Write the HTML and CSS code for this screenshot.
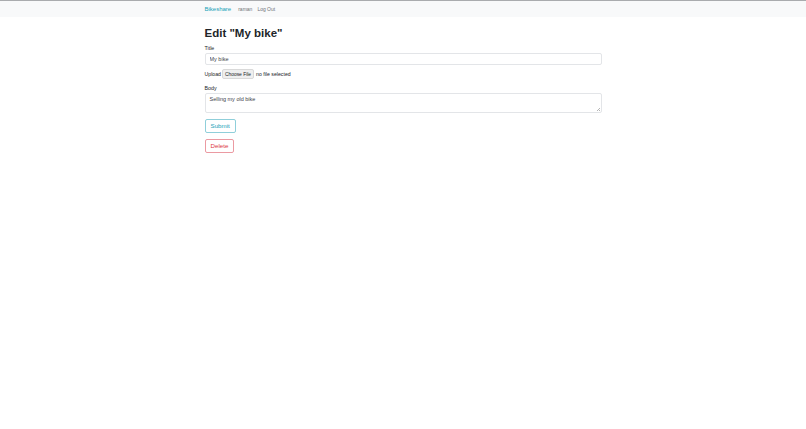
FILE: index.html
```html
<!DOCTYPE html>
<html>
<head>
<meta charset="utf-8">
<title>Edit</title>
<link rel="stylesheet" href="styles.css">
</head>
<body>
<nav class="navbar">
  <div class="container nav-inner">
    <a class="brand" href="#">Bikeshare</a>
    <a class="nav-link" href="#">raman</a>
    <a class="nav-link" href="#">Log Out</a>
  </div>
</nav>
<main class="container">
  <h1 class="title">Edit "My bike"</h1>
  <form class="form">
    <label class="label" for="title">Title</label>
    <input class="input" id="title" type="text" value="My bike">
    <div class="upload-row">
      <span class="upload-label">Upload</span>
      <span class="file-btn">Choose File</span>
      <span class="file-text">no file selected</span>
    </div>
    <label class="label" for="body">Body</label>
    <div class="textarea-wrap">
      <textarea class="textarea" id="body">Selling my old bike</textarea>
    </div>
    <div class="actions">
      <button type="button" class="btn btn-info">Submit</button>
      <button type="button" class="btn btn-danger">Delete</button>
    </div>
  </form>
</main>
</body>
</html>
```
FILE: styles.css
```css
html, body {
  margin: 0;
  padding: 0;
  background: #fff;
  font-family: "Liberation Sans", Arial, sans-serif;
  color: #212529;
}
.container {
  width: 397px;
  margin: 0 auto;
}
.navbar {
  border-top: 1px solid #a9abae;
  background: #f8f9fa;
  height: 16px;
}
.nav-inner {
  display: flex;
  align-items: center;
  height: 16px;
}
.brand {
  font-size: 6px;
  color: #17a2b8;
  text-decoration: none;
  margin-right: 7px;
}
.nav-link {
  font-size: 5px;
  color: #6f7378;
  text-decoration: none;
  margin-right: 5px;
}
.title {
  font-size: 11.5px;
  font-weight: 700;
  margin: 9px 0 4px;
  line-height: 15px;
  letter-spacing: 0;
}
.form {
  display: flex;
  flex-direction: column;
}
.label {
  font-size: 5.3px;
  line-height: 7px;
  margin-bottom: 1px;
}
.input {
  box-sizing: border-box;
  width: 100%;
  height: 12px;
  border: 1px solid #e3e5e8;
  border-radius: 2px;
  padding: 0 4px;
  font-family: inherit;
  font-size: 5.5px;
  color: #3d434a;
  margin: 0 0 4px;
  outline: none;
}
.upload-row {
  display: flex;
  align-items: center;
  height: 10px;
  font-size: 5.2px;
  margin-bottom: 6px;
}
.upload-label {
  margin-right: 1px;
}
.file-btn {
  box-sizing: border-box;
  height: 10px;
  display: flex;
  align-items: center;
  padding: 0 2px;
  font-size: 4.9px;
  background: #efefef;
  border: 1px solid #d9d9d9;
  border-radius: 2px;
  margin-right: 2px;
}
.textarea-wrap {
  position: relative;
  margin: 0 0 6px;
}
.textarea-wrap::after {
  content: "";
  position: absolute;
  right: 2px;
  bottom: 2px;
  width: 3px;
  height: 3px;
  background: linear-gradient(135deg, transparent 45%, #b5b5b5 45%, #b5b5b5 60%, transparent 60%, transparent 75%, #b5b5b5 75%);
}
.textarea {
  box-sizing: border-box;
  width: 100%;
  height: 20px;
  border: 1px solid #e3e5e8;
  border-radius: 2px;
  padding: 2px 4px;
  font-family: inherit;
  font-size: 5.5px;
  color: #3d434a;
  margin: 0;
  outline: none;
  display: block;
  resize: none;
}
.actions {
  display: flex;
  flex-direction: column;
  align-items: flex-start;
  gap: 6px;
}
.btn {
  box-sizing: border-box;
  height: 14px;
  padding: 0 5px;
  background: #fff;
  border-radius: 2px;
  font-family: inherit;
  font-size: 6.2px;
  line-height: 12px;
}
.btn-info {
  border: 1px solid #8fcfda;
  color: #17a2b8;
}
.btn-danger {
  border: 1px solid #eb9aa2;
  color: #dc3545;
}
```
